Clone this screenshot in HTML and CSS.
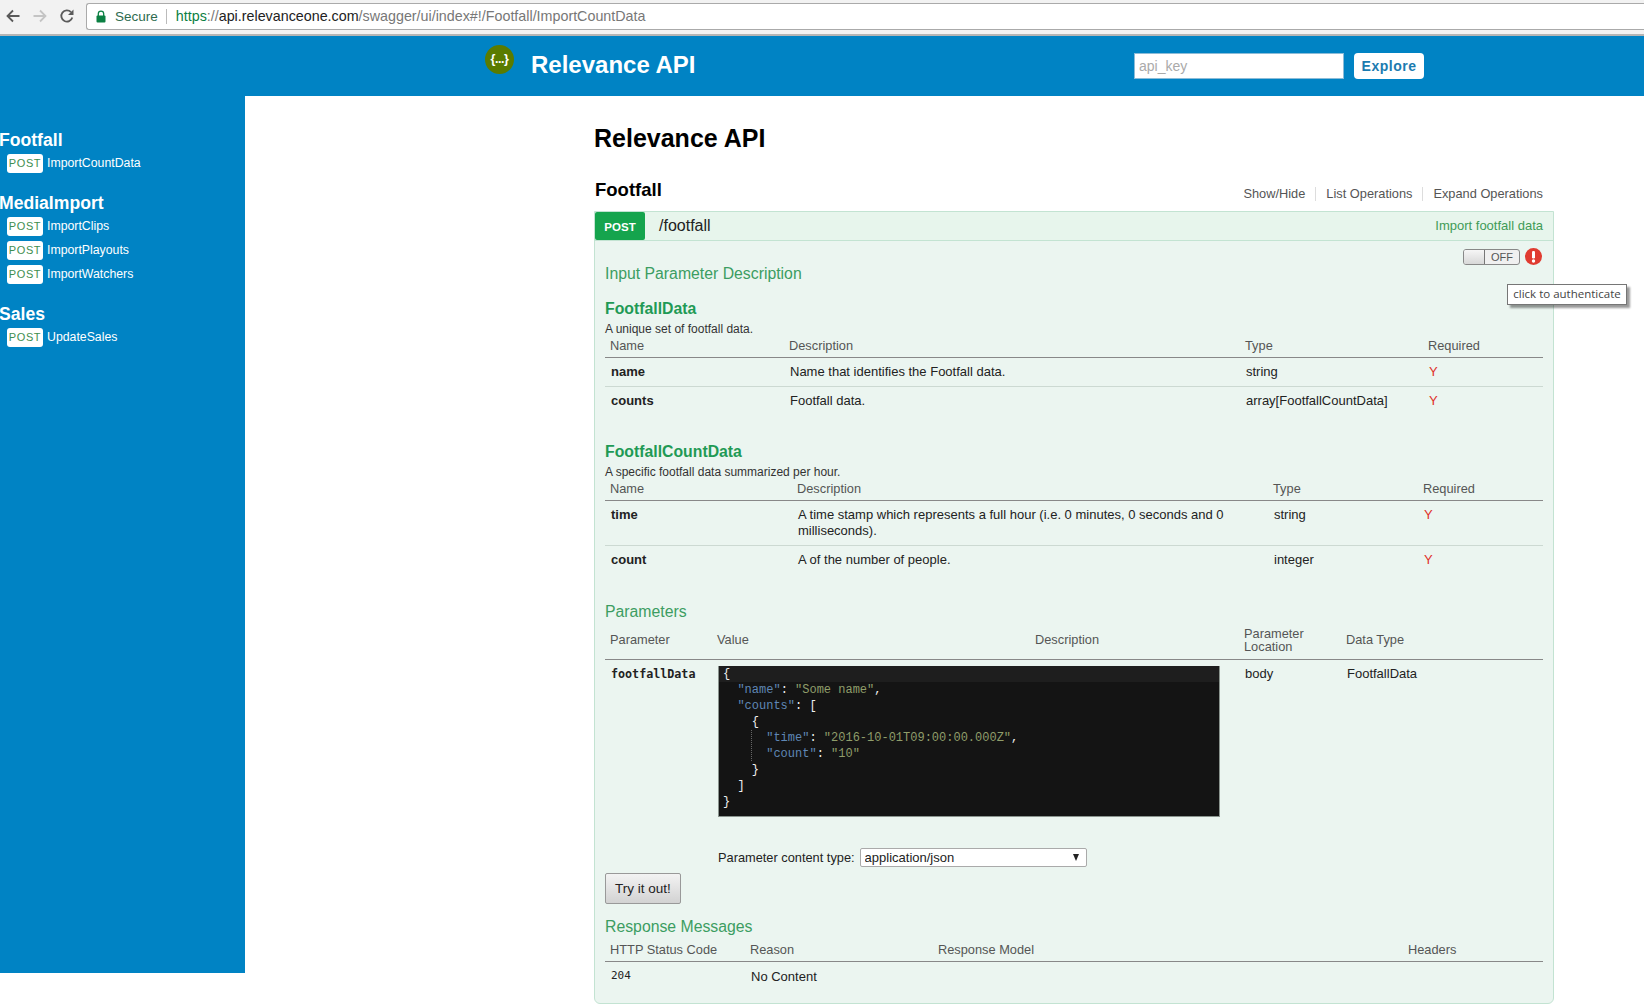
FILE: index.html
```html
<!DOCTYPE html>
<html lang="en">
<head>
  <meta charset="UTF-8">
  <title>Relevance API</title>
  <link rel="stylesheet" href="styles.css">
</head>
<body>

  <!-- Browser toolbar -->
  <div class="chrome">
    <svg class="nav-icon" viewBox="0 0 16 16"><path d="M14.5 8H2.5M8 2.5L2.5 8L8 13.5" fill="none" stroke="#5a5a5a" stroke-width="1.8"/></svg>
    <svg class="nav-icon nav-off" viewBox="0 0 16 16"><path d="M1.5 8H13.5M8 2.5L13.5 8L8 13.5" fill="none" stroke="#c4c4c4" stroke-width="1.8"/></svg>
    <svg class="nav-icon" viewBox="0 0 16 16"><path d="M13.3 9.5A5.6 5.6 0 1 1 12 4.1" fill="none" stroke="#5a5a5a" stroke-width="1.8"/><path d="M14.5 1.5V7H9" fill="#5a5a5a"/></svg>
    <div class="urlbar">
      <svg class="lock" viewBox="0 0 10 13"><path d="M2.3 6V3.8a2.7 2.7 0 0 1 5.4 0V6" fill="none" stroke="#0b8043" stroke-width="1.3"/><rect x="0.5" y="5.5" width="9" height="7" rx="1" fill="#0b8043"/></svg>
      <span class="secure">Secure</span>
      <span class="url"><span class="url-https">https</span><span class="url-path">://</span><span class="url-host">api.relevanceone.com</span><span class="url-path">/swagger/ui/index#!/Footfall/ImportCountData</span></span>
    </div>
  </div>

  <!-- Swagger header -->
  <div class="header">
    <div class="logo">{...}</div>
    <div class="header-title">Relevance API</div>
    <input class="api-key" type="text" placeholder="api_key">
    <button class="explore">Explore</button>
  </div>

  <div class="page">
    <div class="sidebar">
      <div class="side-group">
        <div class="side-title">Footfall</div>
        <div class="side-item"><span class="side-badge">POST</span><span class="side-name">ImportCountData</span></div>
      </div>
      <div class="side-group">
        <div class="side-title">MediaImport</div>
        <div class="side-item"><span class="side-badge">POST</span><span class="side-name">ImportClips</span></div>
        <div class="side-item"><span class="side-badge">POST</span><span class="side-name">ImportPlayouts</span></div>
        <div class="side-item"><span class="side-badge">POST</span><span class="side-name">ImportWatchers</span></div>
      </div>
      <div class="side-group">
        <div class="side-title">Sales</div>
        <div class="side-item"><span class="side-badge">POST</span><span class="side-name">UpdateSales</span></div>
      </div>
    </div>

    <div class="main">
      <h1 class="api-title">Relevance API</h1>

      <div class="resource">
        <h2 class="resource-name">Footfall</h2>
        <ul class="resource-links">
          <li>Show/Hide</li>
          <li>List Operations</li>
          <li>Expand Operations</li>
        </ul>
      </div>

      <div class="operation">
        <div class="op-head">
          <span class="op-method">POST</span>
          <span class="op-path">/footfall</span>
          <span class="op-summary">Import footfall data</span>
        </div>

        <div class="op-content">
          <div class="auth">
            <div class="toggle"><span class="toggle-knob"></span><span class="toggle-text">OFF</span></div>
            <svg class="auth-icon" viewBox="0 0 17 17"><circle cx="8.5" cy="8.5" r="8.5" fill="#e03c31"/><rect x="7" y="3" width="3" height="7.5" rx="1.2" fill="#fff"/><circle cx="8.5" cy="13" r="1.7" fill="#fff"/></svg>
          </div>

          <h4 class="section-title first">Input Parameter Description</h4>

          <h5 class="model-title">FootfallData</h5>
          <p class="model-desc">A unique set of footfall data.</p>
          <table class="grid grid-a">
            <thead>
              <tr><th class="a1">Name</th><th class="a2">Description</th><th class="a3">Type</th><th>Required</th></tr>
            </thead>
            <tbody>
              <tr><td><b>name</b></td><td>Name that identifies the Footfall data.</td><td>string</td><td class="req">Y</td></tr>
              <tr><td><b>counts</b></td><td>Footfall data.</td><td>array[FootfallCountData]</td><td class="req">Y</td></tr>
            </tbody>
          </table>

          <h5 class="model-title second">FootfallCountData</h5>
          <p class="model-desc">A specific footfall data summarized per hour.</p>
          <table class="grid grid-b">
            <thead>
              <tr><th class="b1">Name</th><th class="b2">Description</th><th class="b3">Type</th><th>Required</th></tr>
            </thead>
            <tbody>
              <tr><td><b>time</b></td><td>A time stamp which represents a full hour (i.e. 0 minutes, 0 seconds and 0 milliseconds).</td><td>string</td><td class="req">Y</td></tr>
              <tr><td><b>count</b></td><td>A of the number of people.</td><td>integer</td><td class="req">Y</td></tr>
            </tbody>
          </table>

          <h4 class="section-title params">Parameters</h4>
          <table class="grid grid-p">
            <thead>
              <tr><th class="p1">Parameter</th><th class="p2">Value</th><th class="p3">Description</th><th class="p4 two-line">Parameter<br>Location</th><th>Data Type</th></tr>
            </thead>
            <tbody>
              <tr>
                <td class="mono-bold">footfallData</td>
                <td class="editor-cell" colspan="2">
<div class="editor"><div class="ln active"><span class="p">{</span></div><div class="ln">  <span class="k">"name"</span><span class="p">: </span><span class="s">"Some name"</span><span class="p">,</span></div><div class="ln">  <span class="k">"counts"</span><span class="p">: [</span></div><div class="ln">    <span class="p">{</span></div><div class="ln guide">      <span class="k">"time"</span><span class="p">: </span><span class="s">"2016-10-01T09:00:00.000Z"</span><span class="p">,</span></div><div class="ln guide">      <span class="k">"count"</span><span class="p">: </span><span class="s">"10"</span></div><div class="ln">    <span class="p">}</span></div><div class="ln">  <span class="p">]</span></div><div class="ln"><span class="p">}</span></div></div>
                </td>
                <td>body</td>
                <td>FootfallData</td>
              </tr>
            </tbody>
          </table>

          <div class="content-type">
            <label class="content-label">Parameter content type:</label>
            <div class="select-wrap">
              <select class="content-select"><option>application/json</option></select>
            </div>
          </div>

          <button class="try-out">Try it out!</button>

          <h4 class="section-title responses">Response Messages</h4>
          <table class="grid grid-r">
            <thead>
              <tr><th class="r1">HTTP Status Code</th><th class="r2">Reason</th><th class="r3">Response Model</th><th>Headers</th></tr>
            </thead>
            <tbody>
              <tr><td class="mono">204</td><td>No Content</td><td></td><td></td></tr>
            </tbody>
          </table>
        </div>
      </div>
    </div>
  </div>

  <div class="tooltip">click to authenticate</div>

</body>
</html>
```

FILE: styles.css
```css
* {
  box-sizing: border-box;
}

html, body {
  height: 100%;
}

body {
  margin: 0;
  overflow: hidden;
  background: #fff;
  font-family: "Liberation Sans", Arial, sans-serif;
  font-size: 13px;
  color: #222;
  position: relative;
}

/* browser toolbar */
.chrome {
  display: flex;
  align-items: center;
  height: 36px;
  padding: 0 0 2px 5px;
  background: #f2f2f2;
  border-bottom: 2px solid #b5b5b5;
}

.nav-icon {
  width: 16px;
  height: 16px;
  margin-right: 11px;
}

.urlbar {
  display: flex;
  align-items: center;
  flex: 1;
  height: 27px;
  padding-left: 9px;
  background: #fff;
  border: 1px solid #aaa;
  border-right: none;
  border-radius: 3px 0 0 3px;
  font-family: "Liberation Sans", Arial, sans-serif;
  font-size: 14.3px;
}

.lock {
  width: 10px;
  height: 13px;
  margin-right: 9px;
}

.secure {
  padding-right: 8px;
  margin-right: 9px;
  border-right: 1px solid #bbb;
  color: #2e6b4f;
  font-size: 13.5px;
}

.url-https {
  color: #0b8043;
}

.url-path {
  color: #777;
}

.url-host {
  color: #222;
}

/* swagger header */
.header {
  display: flex;
  align-items: center;
  height: 60px;
  padding-left: 485px;
  background: #0083c4;
}

.logo {
  width: 29px;
  height: 29px;
  margin: -14px 17px 0 0;
  border-radius: 50%;
  background: #5a7b00;
  color: #fff;
  font-size: 12.5px;
  font-weight: bold;
  letter-spacing: -0.4px;
  line-height: 28px;
  text-align: center;
}

.header-title {
  width: 603px;
  padding-bottom: 2px;
  color: #fff;
  font-size: 24px;
  font-weight: bold;
}

.api-key {
  width: 210px;
  height: 26px;
  padding: 0 4px;
  background: #fff;
  border: 1px solid #8bbcd8;
  border-radius: 0;
  font-family: "Liberation Sans", Arial, sans-serif;
  font-size: 14px;
}

.api-key::placeholder {
  color: #aaa;
}

.explore {
  width: 70px;
  height: 26px;
  margin-left: 10px;
  padding: 0;
  background: #fff;
  border: none;
  border-radius: 4px;
  color: #1b7bb0;
  font-family: "Liberation Sans", Arial, sans-serif;
  font-size: 14px;
  font-weight: bold;
  letter-spacing: 0.5px;
}

/* sidebar */
.page {
  display: flex;
  align-items: flex-start;
}

.sidebar {
  flex: none;
  width: 245px;
  height: 877px;
  padding-top: 34px;
  background: #0083c4;
  color: #fff;
}

.side-group {
  margin-bottom: 20px;
}

.side-title {
  font-size: 17.6px;
  font-weight: bold;
  line-height: 20px;
  margin-left: -1px;
  margin-bottom: 4px;
}

.side-item {
  display: flex;
  align-items: center;
  height: 19px;
  margin-bottom: 5px;
  padding-left: 7px;
  font-size: 12.3px;
}

.side-item:last-child {
  margin-bottom: 0;
}

.side-name {
  padding-bottom: 1px;
}

.side-badge {
  width: 36px;
  height: 19px;
  margin-right: 4px;
  background: #fff;
  border-radius: 3px;
  color: #3e8e50;
  font-size: 11px;
  letter-spacing: 0.6px;
  line-height: 19px;
  text-align: center;
}

/* main column */
.main {
  flex: none;
  width: 960px;
  margin-left: 349px;
}

.api-title {
  margin: 28px 0 0;
  font-size: 25px;
  line-height: 28px;
  color: #000;
}

.resource {
  display: flex;
  justify-content: space-between;
  align-items: flex-end;
  margin-top: 27px;
  padding-left: 1px;
}

.resource-name {
  margin: 0;
  font-size: 18.5px;
  line-height: 22px;
  color: #000;
}

.resource-links {
  display: flex;
  margin: 0 11px 0 0;
  padding: 0;
  list-style: none;
  color: #555;
  font-size: 12.8px;
  line-height: 14px;
}

.resource-links li {
  padding: 0 10px;
  border-right: 1px solid #ddd;
}

.resource-links li:last-child {
  padding-right: 0;
  border-right: none;
}

/* operation box */
.operation {
  margin-top: 10px;
  height: 793px;
  background: #ebf5f0;
  border: 1px solid #c3e3d2;
  border-radius: 0 0 6px 6px;
}

.op-head {
  display: flex;
  align-items: center;
  height: 29px;
  background: #e7f5ec;
  border-bottom: 1px solid #c3e3d2;
}

.op-method {
  width: 50px;
  height: 28px;
  background: #15a44d;
  border-radius: 2px;
  color: #fff;
  font-size: 11.5px;
  font-weight: bold;
  line-height: 30px;
  text-align: center;
}

.op-path {
  flex: 1;
  margin-left: 14px;
  color: #222;
  font-size: 16px;
}

.op-summary {
  margin-right: 10px;
  padding-bottom: 2px;
  color: #3f9b57;
  font-size: 13px;
}

.op-content {
  padding: 7px 10px 0;
}

.auth {
  float: right;
  display: flex;
  align-items: center;
  margin-right: 1px;
}

.toggle {
  display: flex;
  width: 57px;
  height: 16px;
  background: #f0f0f0;
  border: 1px solid #888;
  border-radius: 3px;
  color: #555;
  font-size: 11px;
  line-height: 14px;
}

.toggle-knob {
  width: 21px;
  background: linear-gradient(#f6f6f6, #d8d8d8);
  border-right: 1px solid #777;
  border-radius: 2px 0 0 2px;
}

.toggle-text {
  flex: 1;
  text-align: center;
}

.auth-icon {
  width: 17px;
  height: 17px;
  margin-left: 5px;
}

.section-title {
  margin: 0;
  color: #3c9d62;
  font-size: 15.8px;
  font-weight: normal;
  line-height: 20px;
}

.section-title.first {
  margin-top: 16px;
}

.section-title.params {
  margin-top: 28px;
}

.section-title.responses {
  margin-top: 13px;
}

.model-title {
  margin: 15px 0 0;
  color: #1f9a55;
  font-size: 15.8px;
  line-height: 20px;
}

.model-title.second {
  margin-top: 27px;
}

.model-desc {
  margin: 3px 0 0;
  color: #333;
  font-size: 12px;
  line-height: 14px;
}

/* tables */
.grid {
  width: 938px;
  table-layout: fixed;
  border-collapse: collapse;
}

.grid th {
  padding: 0 5px 1px;
  border-bottom: 1px solid #888;
  color: #555;
  font-size: 12.8px;
  font-weight: normal;
  line-height: 20px;
  text-align: left;
}

.grid td {
  padding: 6px 6px 6px;
  border-bottom: 1px solid #ccd9d2;
  color: #222;
  font-size: 13px;
  line-height: 16px;
  vertical-align: top;
}

.grid tbody tr:last-child td {
  border-bottom: none;
}

.a1 { width: 179px; }
.a2 { width: 456px; }
.a3 { width: 183px; }

.b1 { width: 187px; }
.b2 { width: 476px; }
.b3 { width: 150px; }

.p1 { width: 107px; }
.p2 { width: 318px; }
.p3 { width: 209px; }
.p4 { width: 102px; }

.r1 { width: 140px; }
.r2 { width: 188px; }
.r3 { width: 470px; }

.grid .req {
  color: #e0312a;
}

.grid-p th {
  height: 37px;
  padding-bottom: 0;
  vertical-align: middle;
}

.grid-p .two-line {
  line-height: 13px;
}

.mono-bold {
  font-family: "DejaVu Sans Mono", monospace;
  font-weight: bold;
}

.grid .mono-bold {
  font-size: 11.7px;
}

.grid .mono {
  font-family: "DejaVu Sans Mono", monospace;
  font-size: 11px;
}

.grid .editor-cell {
  padding: 6px 0 0 6px;
}

.editor {
  width: 502px;
  height: 151px;
  background: #141414;
  border: 1px solid #8a948e;
  font-family: "Liberation Mono", monospace;
  font-size: 12px;
  line-height: 16px;
  white-space: pre;
}

.ln {
  padding-left: 4px;
}

.ln.active {
  margin-top: -1px;
  background: #1e1e1e;
}

.ln.guide {
  background: repeating-linear-gradient(#666 0 1px, transparent 1px 2px) no-repeat 32px 0 / 1px 100%;
}

.k { color: #5f87b5; }
.s { color: #8f9d6a; }
.p { color: #f0f0f0; }

.content-type {
  display: flex;
  align-items: center;
  height: 19px;
  margin: 31px 0 0 113px;
}

.content-label {
  margin-right: 5px;
  color: #222;
  font-size: 12.8px;
}

.select-wrap {
  position: relative;
  width: 227px;
  height: 19px;
}

/* the little solid arrow of the old native select */
.select-wrap::after {
  content: "";
  position: absolute;
  right: 8px;
  top: 6px;
  border-left: 3.5px solid transparent;
  border-right: 3.5px solid transparent;
  border-top: 7px solid #222;
  pointer-events: none;
}

.content-select {
  display: block;
  width: 100%;
  height: 19px;
  padding: 0 0 0 4px;
  appearance: none;
  background: #fff;
  border: 1px solid #aaa;
  border-radius: 2px;
  color: #222;
  font-family: "Liberation Sans", Arial, sans-serif;
  font-size: 13px;
}

.try-out {
  display: block;
  width: 76px;
  height: 31px;
  margin-top: 6px;
  padding: 0;
  background: linear-gradient(#f3f3f3, #d2d2d2);
  border: 1px solid #999;
  border-radius: 2px;
  color: #222;
  font-family: "Liberation Sans", Arial, sans-serif;
  font-size: 13.5px;
}

.grid-r th {
  padding-top: 3px;
}

.grid-r td {
  padding-top: 7px;
}

.grid-r .mono {
  padding-top: 6px;
}

.tooltip {
  position: absolute;
  left: 1507px;
  top: 284px;
  width: 120px;
  height: 21px;
  background: #fff;
  border: 1px solid #767676;
  box-shadow: 3px 3px 2px rgba(0, 0, 0, 0.4);
  color: #444;
  font-family: "Open Sans", sans-serif;
  font-size: 11.5px;
  line-height: 18px;
  text-align: center;
}
```
